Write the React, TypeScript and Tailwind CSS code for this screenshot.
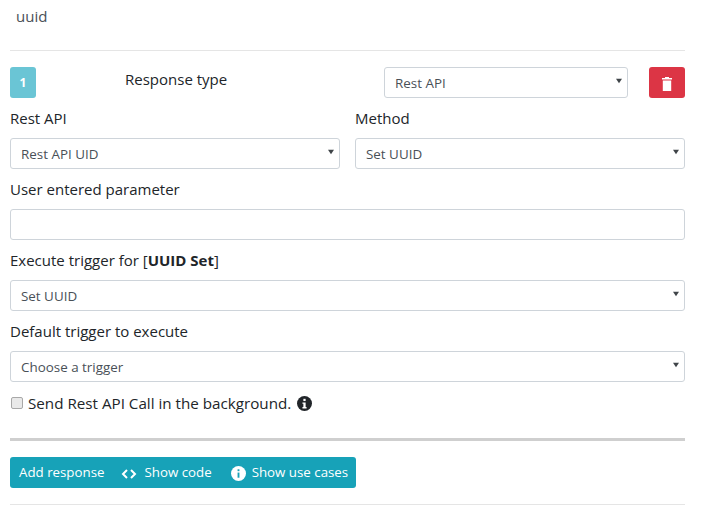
const FONT = "font-['Open_Sans','Noto_Sans',sans-serif]";

function SelectBox({ value, className }: { value: string; className?: string }) {
  return (
    <div className={`relative h-[31px] ${className ?? ""}`}>
      <select
        defaultValue={value}
        className="h-full w-full appearance-none rounded-[3px] border border-[#ced4da] bg-white pb-0 pl-[10px] pt-[2px] text-[13.4px] leading-[27px] text-[#495057] outline-none"
      >
        <option>{value}</option>
      </select>
      <svg viewBox="0 0 8 6" className="pointer-events-none absolute right-[6px] top-[11px] h-[6px] w-[6px] fill-[#3f4448]">
        <path d="M0 0h8L4 6z" />
      </svg>
    </div>
  );
}

function Label({ children }: { children: React.ReactNode }) {
  return <div className="text-[15px] leading-5 text-[#212529]">{children}</div>;
}

export default function App() {
  return (
    <div className={`h-[516px] w-[707px] overflow-hidden bg-white ${FONT}`}>
      <div className="ml-[10px] w-[675px]">
        <div className="h-[51px] border-b border-[#e5e5e5] pl-[6px] pt-[6px] text-[15px] leading-5 text-[#495057]">uuid</div>

        <div className="mt-[16px] flex h-[31px] items-start">
          <div className="flex h-[31px] w-[26px] items-center justify-center rounded-[3px] bg-[#6ac5d5] text-[12px] font-bold text-white">1</div>
          <div className="ml-[89px] w-[259px] pt-[2px] text-[15px] leading-5 text-[#212529]">Response type</div>
          <SelectBox value="Rest API" className="w-[244px]" />
          <button className="ml-[21px] flex h-[31px] w-[36px] items-center justify-center rounded-[3px] bg-[#dc3545]">
            <svg viewBox="0 0 10 14" className="mt-[2px] h-[14px] w-[10px] fill-white">
              <path d="M0 1h3V0h4v1h3v1.5H0zM.8 3.5h8.4V14H.8z" />
            </svg>
          </button>
        </div>

        <div className="mt-[10px] flex gap-[15px]">
          <div className="w-[330px]">
            <Label>Rest API</Label>
            <SelectBox value="Rest API UID" className="mt-[10px]" />
          </div>
          <div className="w-[330px]">
            <Label>Method</Label>
            <SelectBox value="Set UUID" className="mt-[10px]" />
          </div>
        </div>

        <div className="mt-[10px]">
          <Label>User entered parameter</Label>
          <input className="mt-[10px] block h-[31px] w-full rounded-[3px] border border-[#ced4da] bg-white outline-none" />
        </div>

        <div className="mt-[10px]">
          <Label>
            Execute trigger for [<b className="font-bold">UUID Set</b>]
          </Label>
          <SelectBox value="Set UUID" className="mt-[10px]" />
        </div>

        <div className="mt-[10px]">
          <Label>Default trigger to execute</Label>
          <SelectBox value="Choose a trigger" className="mt-[10px]" />
        </div>

        <div className="mt-[11px] flex items-center">
          <input type="checkbox" className="ml-px h-[12px] w-[12px] appearance-none rounded-[2px] border border-[#a8a8a8] bg-[#e9e9e9]" />
          <span className="ml-[5px] text-[15.2px] leading-5 text-[#212529]">Send Rest API Call in the background.</span>
          <svg viewBox="0 0 16 16" className="ml-[6px] mt-[1px] h-[15px] w-[15px]">
            <circle cx="8" cy="8" r="8" fill="#212529" />
            <rect x="6.8" y="3" width="2.4" height="2.4" fill="#fff" />
            <path d="M5.8 6.8h3.4v5h1v1.4H5.8v-1.4h1v-3.6h-1z" fill="#fff" />
          </svg>
        </div>

        <div className="mt-[25px] h-[3px] bg-[#cfcfcf]" />

        <div className="mt-[16px] flex h-[31px] w-[346px] items-center rounded-[3px] bg-[#17a2b8] pl-[9px] text-[13.3px] text-white">
          <span>Add response</span>
          <svg viewBox="0 0 16 10" fill="none" stroke="#fff" strokeWidth="2" className="ml-[17px] mt-[2px] h-[10px] w-[16px]">
            <path d="M6 1 2 5l4 4M10 1l4 4-4 4" />
          </svg>
          <span className="ml-[7px]">Show code</span>
          <svg viewBox="0 0 16 16" className="ml-[19px] mt-[2px] h-[15px] w-[15px]">
            <circle cx="8" cy="8" r="8" fill="#fff" />
            <rect x="7" y="3.5" width="2" height="2" fill="#17a2b8" />
            <rect x="7" y="7" width="2" height="5.5" fill="#17a2b8" />
          </svg>
          <span className="ml-[6px]">Show use cases</span>
        </div>

        <div className="mt-[16px] border-t border-[#e5e5e5]" />
      </div>
    </div>
  );
}
